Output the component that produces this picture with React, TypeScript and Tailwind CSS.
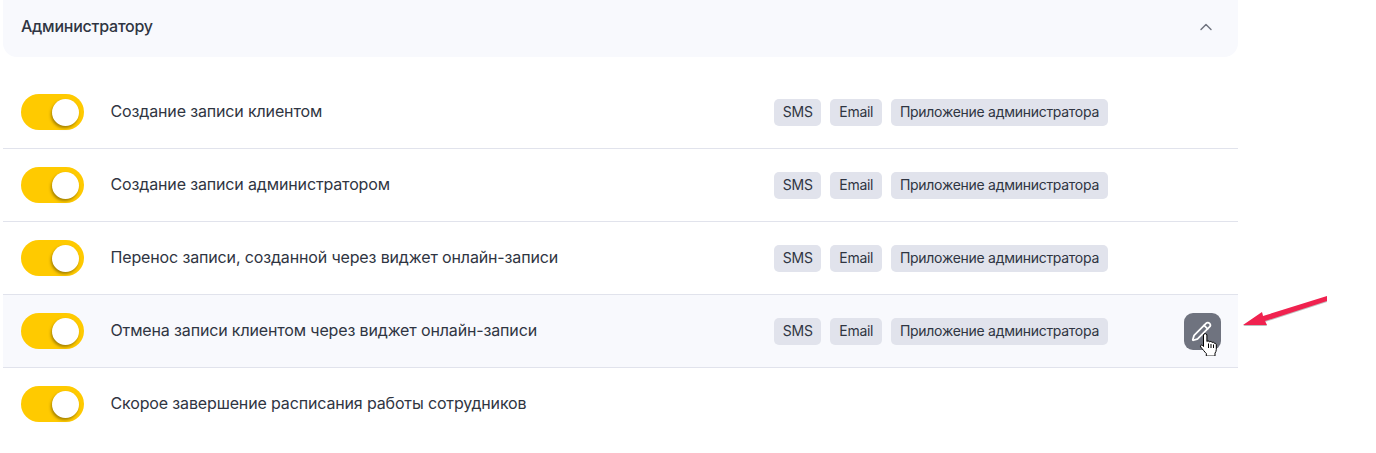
import { ChevronUp, Pencil } from 'lucide-react';

interface Notice {
  title: string;
  tags: string[];
  active?: boolean;
}

const channels = ['SMS', 'Email', 'Приложение администратора'];

const notices: Notice[] = [
  { title: 'Создание записи клиентом', tags: channels },
  { title: 'Создание записи администратором', tags: channels },
  { title: 'Перенос записи, созданной через виджет онлайн-записи', tags: channels },
  { title: 'Отмена записи клиентом через виджет онлайн-записи', tags: channels, active: true },
  { title: 'Скорое завершение расписания работы сотрудников', tags: [] },
];

const Toggle = () => (
  <div className="flex h-[36px] w-[63px] shrink-0 items-center justify-end rounded-full bg-[#ffca00] pr-[5px]">
    <div className="h-[27px] w-[27px] rounded-full bg-white shadow-[-1px_2px_3px_rgba(90,70,0,0.55)]" />
  </div>
);

const Row = ({ notice, last }: { notice: Notice; last: boolean }) => (
  <div
    className={`flex h-[73px] items-center border-b pl-[18px] pr-[17px] ${last ? 'border-transparent' : 'border-[#e1e3ec]'} ${notice.active ? 'bg-[#f8f9fd]' : ''}`}
  >
    <Toggle />
    <div className="ml-[26.5px] w-[663.5px] shrink-0 pb-[2px] text-[16px] tracking-[-0.009em] text-[#2f3542]">{notice.title}</div>
    <div className="flex flex-1 gap-[9px]">
      {notice.tags.map((tag) => (
        <span key={tag} className="flex h-[27px] items-center rounded-[5px] bg-[#e1e3ec] px-[8.85px] pb-[1px] text-[14px] tracking-[-0.02em] text-[#2f3542]">
          {tag}
        </span>
      ))}
    </div>
    {notice.active && (
      <button className="relative flex h-[37px] w-[37px] items-center justify-center rounded-[9px] bg-[#6f737f] text-white">
        <Pencil size={21} strokeWidth={2} className="-translate-x-[1px]" />
        <svg className="absolute left-[15px] top-[20px]" width="18" height="23" viewBox="0 0 18 23">
          <path
            d="M4.5 2c0-1.8 3.4-1.8 3.4 0v6.5c.6-.8 2.4-.7 2.6.4.6-.7 2.4-.6 2.6.6.6-.5 2.4-.3 2.5.9.5-.3 1.7.1 1.7 1.4v4.7c0 1.6-.6 2.6-1.3 3.6v3H7.3v-2.6c-1.5-1.4-3.8-4.4-5.6-6.5-.9-1.2.6-2.6 1.8-1.5l1 1V2z"
            fill="#fff"
            stroke="#000"
            strokeWidth="1"
            strokeLinejoin="round"
          />
          <path d="M9.5 10.5V15M12 11V15M14.5 11.5V15" stroke="#000" strokeWidth="1" />
        </svg>
      </button>
    )}
  </div>
);

export default function App() {
  return (
    <div className="relative h-[453px] w-[1376px] overflow-hidden bg-white font-['Inter',sans-serif]">
      <div className="ml-[3px] w-[1235px]">
        <div className="mb-[19px] flex h-[57px] items-center justify-between rounded-b-[14px] bg-[#f8f9fd] pb-[4px] pl-[18px] pr-[22px]">
          <span className="pb-[2px] text-[16px] font-medium tracking-[-0.015em] text-[#2f3542]">Администратору</span>
          <ChevronUp size={20} strokeWidth={1.7} className="text-[#6f737f]" />
        </div>
        {notices.map((notice, i) => (
          <Row key={notice.title} notice={notice} last={i === notices.length - 1} />
        ))}
      </div>
      {/* red annotation arrow */}
      <svg className="absolute left-[1240px] top-[294px]" width="90" height="40" viewBox="0 0 90 40">
        <path d="M87 3 L23 23 L22 19 L3 32 L27 32 L25 28 L87 8 Z" fill="#000" opacity="0.25" />
        <path d="M87 2 L23 22 L22 18 L3 31 L27 31 L25 27 L87 7 Z" fill="#f0224f" />
      </svg>
    </div>
  );
}
